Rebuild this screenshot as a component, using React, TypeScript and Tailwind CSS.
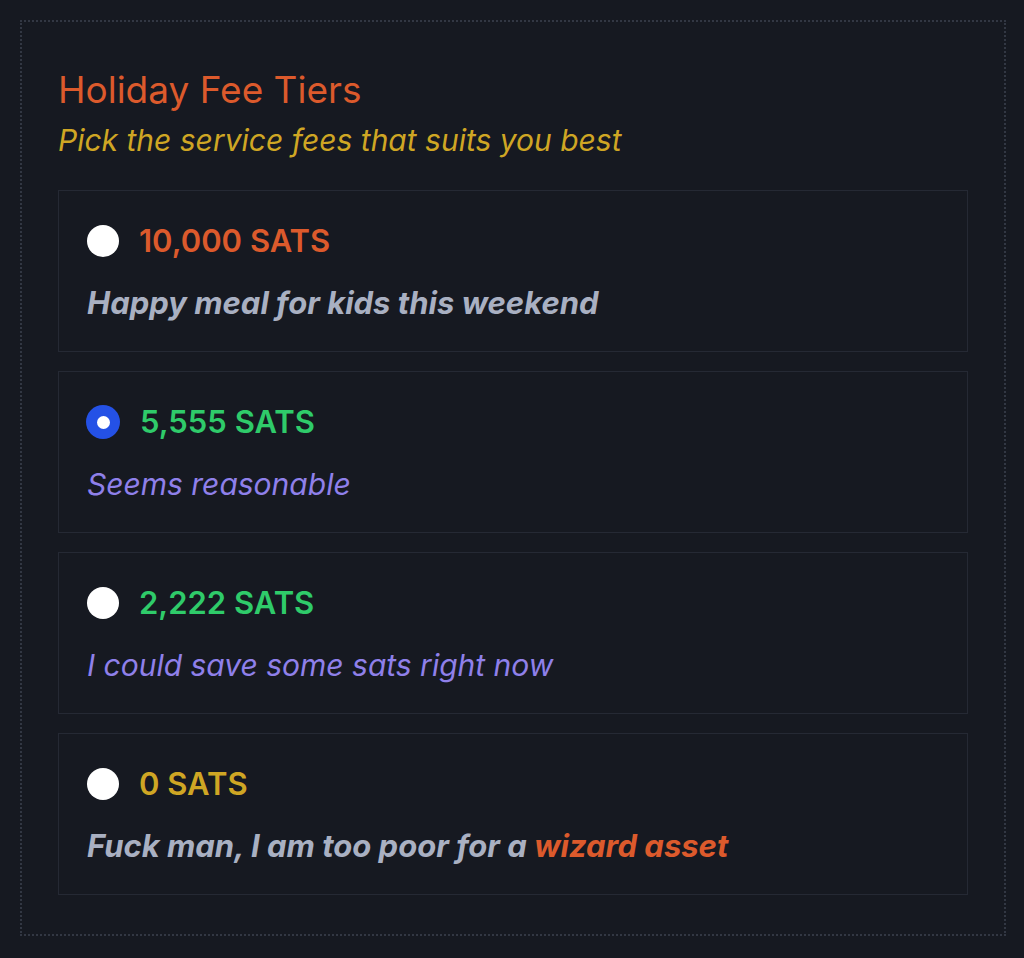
import React, { useState } from "react";

const tiers = [
  { amount: "10,000 SATS", amountColor: "text-[#dc5a2c]", desc: <span className="font-bold text-[#a9b0c2]">Happy meal for kids this weekend</span> },
  { amount: "5,555 SATS", amountColor: "text-[#2fcb6a]", desc: <span className="text-[30px] text-[#8f80ea]">Seems reasonable</span> },
  { amount: "2,222 SATS", amountColor: "text-[#2fcb6a]", desc: <span className="text-[30px] text-[#8f80ea]">I could save some sats right now</span> },
  {
    amount: "0 SATS",
    amountColor: "text-[#cfa624]",
    desc: (
      <span className="font-bold text-[#a9b0c2]">
        Fuck man, I am too poor for a <span className="text-[#dc5a2c]">wizard asset</span>
      </span>
    ),
  },
];

export default function App() {
  const [sel, setSel] = useState(1);
  return (
    <div className="w-[1024px] h-[958px] bg-[#161921] p-[20px] font-['Inter','Noto_Sans',sans-serif]">
      <div className="h-[916px] w-[986px] border-2 border-dotted border-[#323743] px-[36px] pt-[46px]">
        <h1 className="text-[37px] leading-[44px] text-[#dc5a2c]">Holiday Fee Tiers</h1>
        <p className="mt-[10px] text-[30px] leading-[36px] italic text-[#cfa624]">Pick the service fees that suits you best</p>
        <div className="mt-[32px] flex flex-col gap-[19px]">
          {tiers.map((t, i) => (
            <div
              key={i}
              onClick={() => setSel(i)}
              className="h-[162px] w-[910px] border border-[#252934] px-[28px] pt-[32px] cursor-pointer"
            >
              <div className="flex items-center gap-[20px]">
                {sel === i ? (
                  <span className="w-[34px] h-[34px] -ml-[1px] rounded-full bg-[#2451e6] flex items-center justify-center">
                    <span className="w-[13px] h-[13px] rounded-full bg-white" />
                  </span>
                ) : (
                  <span className="w-[32px] h-[32px] rounded-full bg-white" />
                )}
                <span className={`text-[31px] leading-[36px] font-semibold ${t.amountColor}`}>{t.amount}</span>
              </div>
              <div className="mt-[26px] text-[31px] leading-[36px] italic">{t.desc}</div>
            </div>
          ))}
        </div>
      </div>
    </div>
  );
}
